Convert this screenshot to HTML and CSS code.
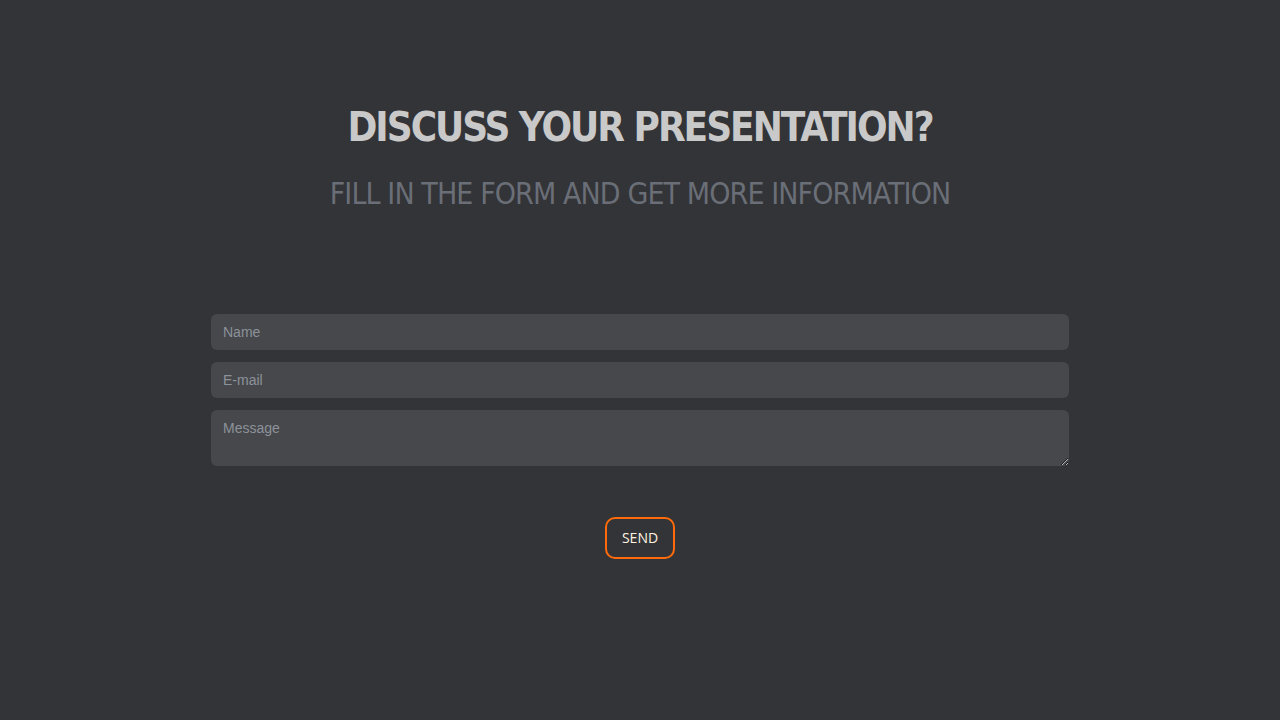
FILE: index.html
```html
<!DOCTYPE html>
<html>
<head>
<meta charset="utf-8">
<link rel="stylesheet" href="styles.css">
</head>
<body>
<section class="contact">
  <h1 class="title">DISCUSS YOUR PRESENTATION?</h1>
  <p class="subtitle">FILL IN THE FORM AND GET MORE INFORMATION</p>
  <form class="form">
    <input class="field" type="text" placeholder="Name">
    <input class="field" type="text" placeholder="E-mail">
    <textarea class="field area" placeholder="Message"></textarea>
    <div class="actions"><button class="send" type="button">SEND</button></div>
  </form>
</section>
</body>
</html>
```
FILE: styles.css
```css
html, body { margin: 0; padding: 0; }
body {
  background: #333438;
  width: 1280px;
  height: 720px;
  overflow: hidden;
}
.contact {
  display: flex;
  flex-direction: column;
  align-items: center;
  padding-top: 100px;
}
.title {
  margin: 0;
  font-family: "DejaVu Sans Condensed", "DejaVu Sans", sans-serif;
  font-weight: bold;
  font-size: 40px;
  line-height: 54px;
  letter-spacing: -2px;
  color: #c9c9c9;
}
.subtitle {
  margin: 20px 0 0;
  font-family: "DejaVu Sans Condensed", "DejaVu Sans", sans-serif;
  font-weight: 300;
  font-size: 30px;
  line-height: 40px;
  letter-spacing: -0.9px;
  color: #6a6e77;
}
.form {
  width: 858px;
  margin-top: 100px;
  display: flex;
  flex-direction: column;
  gap: 12px;
}
.field {
  box-sizing: border-box;
  width: 100%;
  height: 36px;
  border: none;
  border-radius: 6px;
  background: #47484c;
  padding: 0 12px;
  font-family: "Liberation Sans", Arial, sans-serif;
  font-size: 14px;
  color: #ddd;
  outline: none;
}
.field::placeholder { color: #8c929a; }
.area {
  height: 56px;
  padding-top: 10px;
  resize: vertical;
  display: block;
}
.actions {
  display: flex;
  justify-content: center;
  margin-top: 39px;
}
.send {
  box-sizing: border-box;
  width: 70px;
  height: 42px;
  border: 2px solid #ff6a0a;
  border-radius: 10px;
  background: transparent;
  font-family: "Open Sans", sans-serif;
  font-size: 14px;
  line-height: 36px;
  color: #fff3e0;
  padding: 0 0 1px;
}
```
